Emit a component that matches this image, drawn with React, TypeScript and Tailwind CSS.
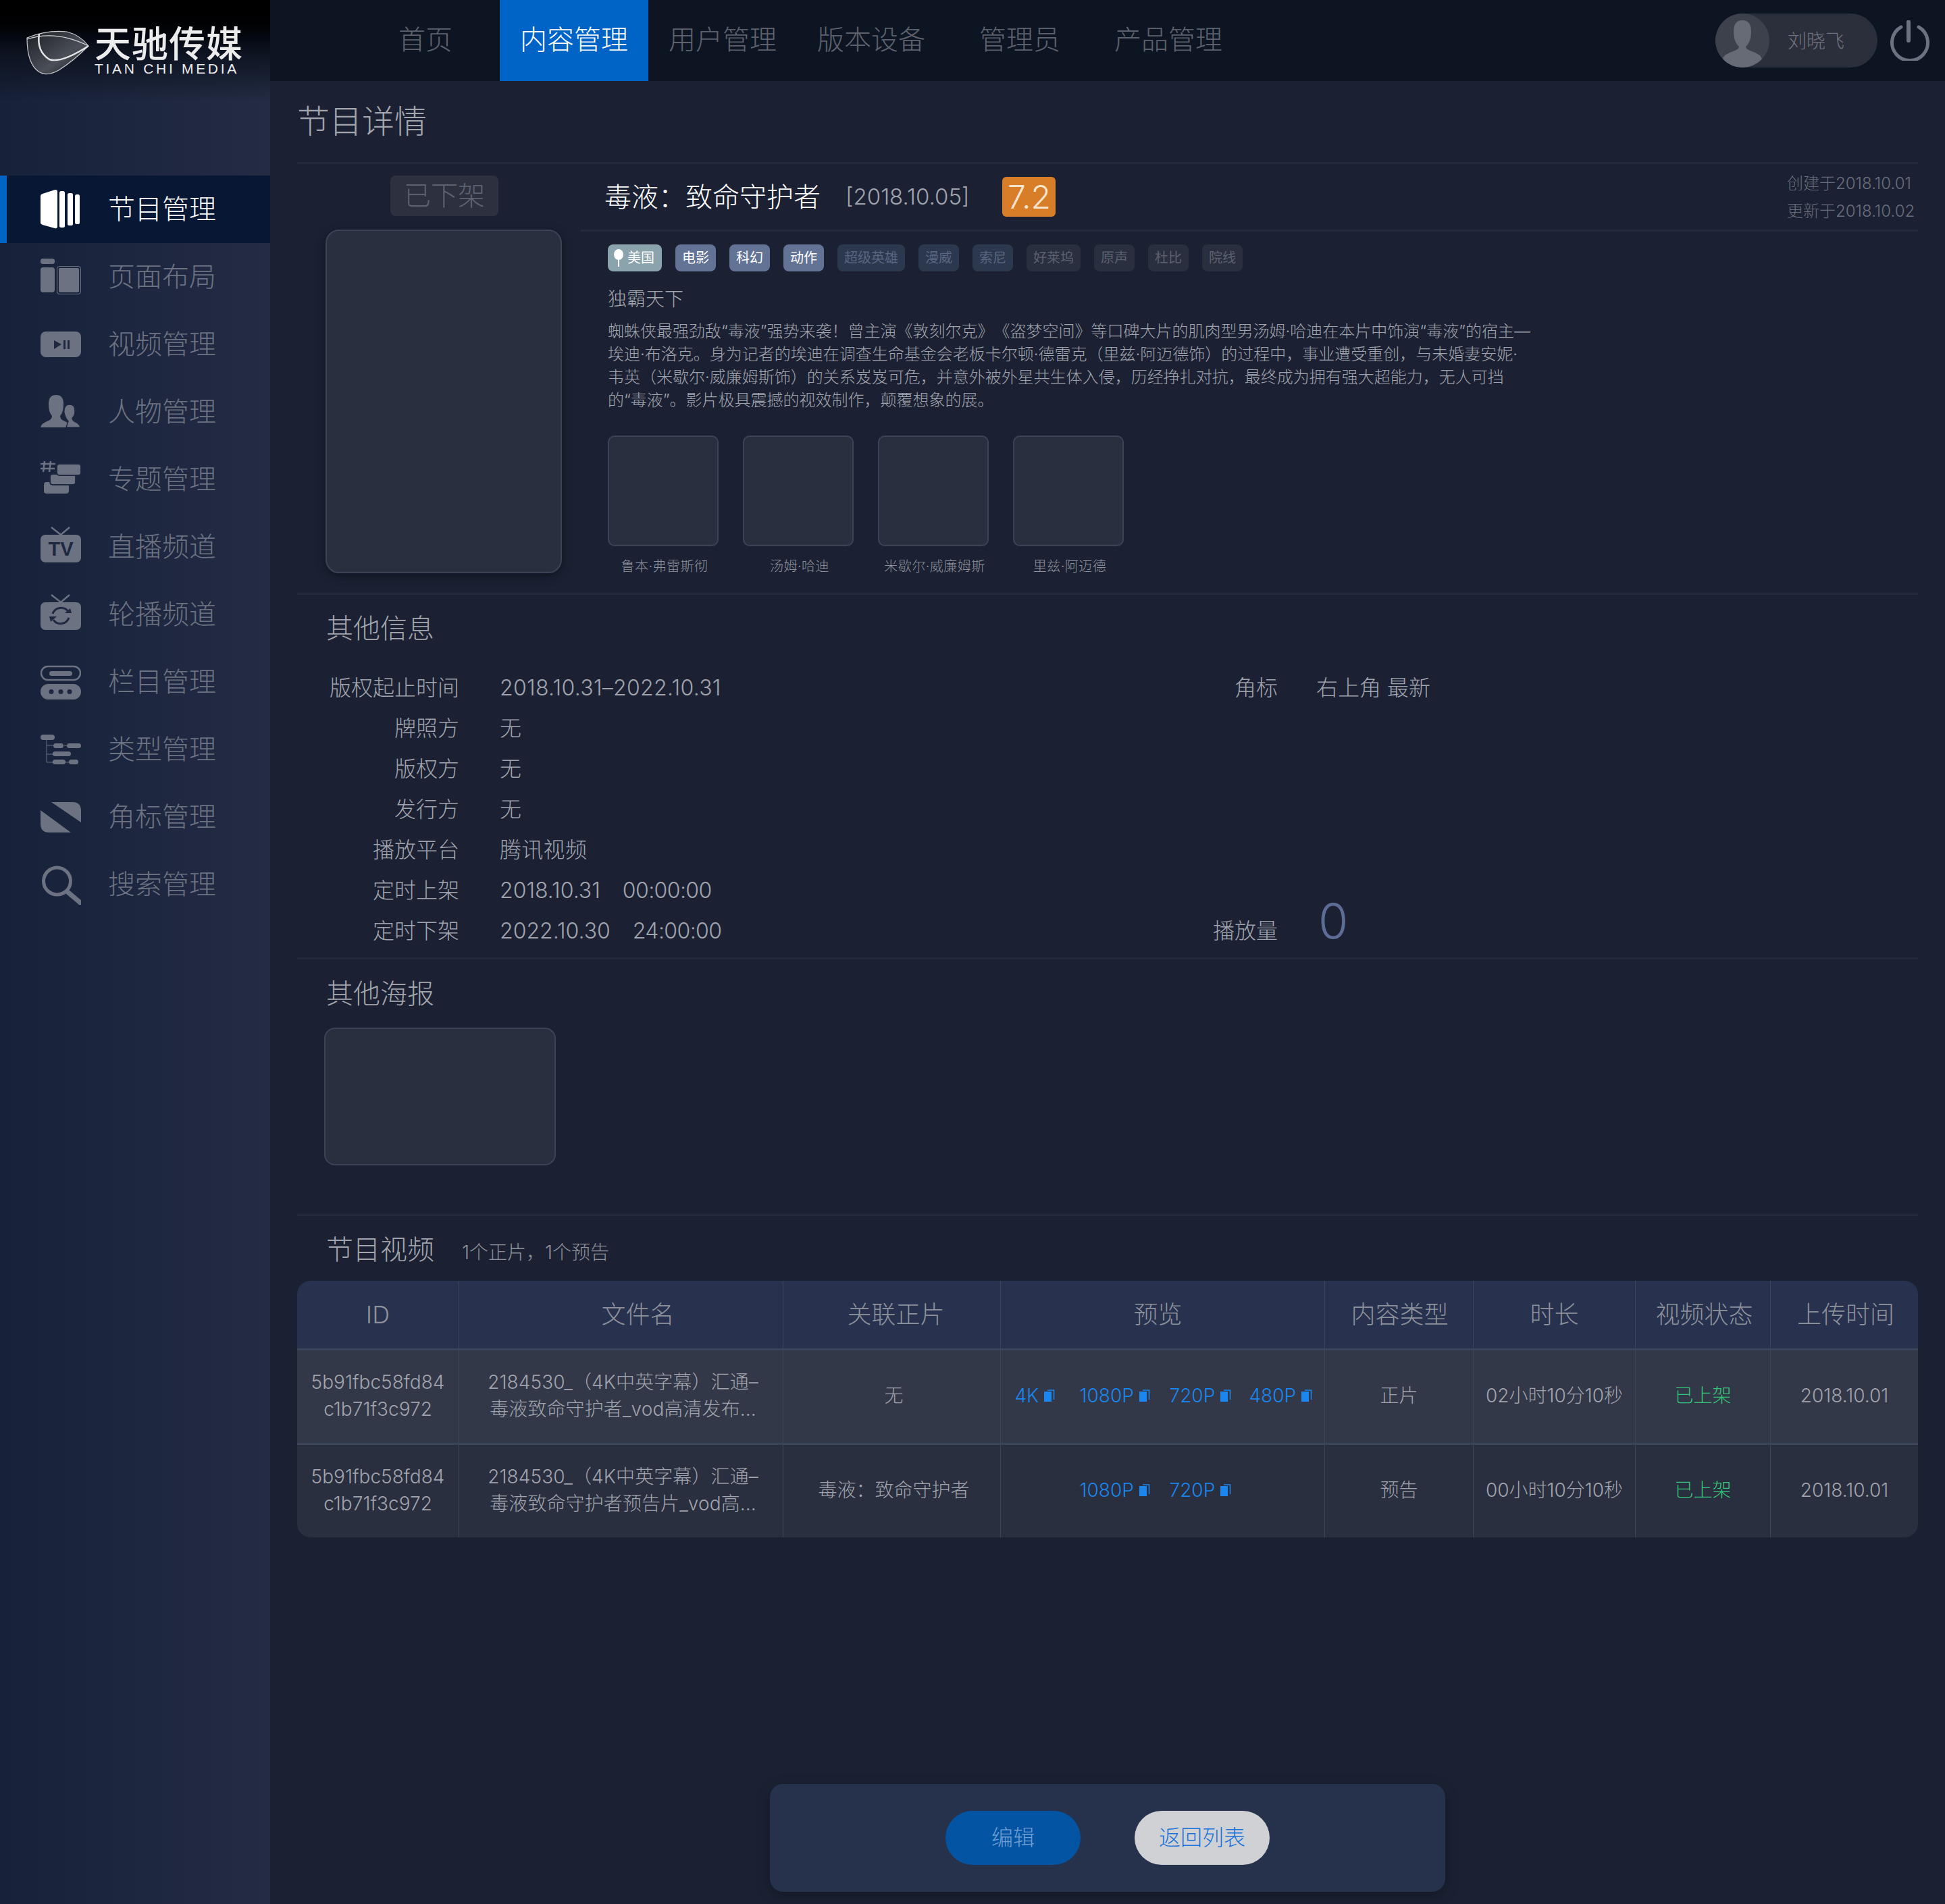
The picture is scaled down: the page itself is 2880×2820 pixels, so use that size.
import type { ReactNode } from "react";

const Icon = ({ children }: { children: ReactNode }) => (
  <svg viewBox="0 0 60 60" className="w-[60px] h-[60px] shrink-0" fill="currentColor">
    {children}
  </svg>
);

const DARK = "#1e2840";

const MENU: { label: string; icon: ReactNode }[] = [
  {
    label: "节目管理",
    icon: (
      <>
        <path d="M0 10 Q0 8 3 7 L20 1.5 Q25 0 25 4 V55 Q25 59 21 58 L3 53 Q0 52 0 50 Z" />
        <rect x="28" y="3" width="8" height="54" rx="2.5" />
        <rect x="40" y="6" width="8" height="48" rx="2.5" />
        <rect x="51" y="8" width="7" height="44" rx="2.5" />
      </>
    ),
  },
  {
    label: "页面布局",
    icon: (
      <>
        <rect x="0" y="3" width="21" height="8" rx="3.5" />
        <rect x="0" y="16" width="21" height="37" rx="4" />
        <rect x="24.5" y="14.5" width="35" height="41" rx="3.5" fill="none" stroke="currentColor" strokeWidth="1" />
        <rect x="27" y="17" width="30" height="36" rx="2" />
      </>
    ),
  },
  {
    label: "视频管理",
    icon: (
      <>
        <rect x="0" y="11" width="60" height="38" rx="8" />
        <path d="M20 24 L31 30 L20 37 Z" fill={DARK} />
        <rect x="34" y="24" width="3" height="13" fill={DARK} />
        <rect x="40" y="24" width="3" height="13" fill={DARK} />
      </>
    ),
  },
  {
    label: "人物管理",
    icon: (
      <>
        <path d="M0 53 Q1 47 12 43 Q17 41 17 36 Q12 31 12 18 Q12 5 23 5 Q34 5 34 18 Q34 31 29 36 Q29 41 34 43 Q38 45 40 46 L44 53 Z" />
        <path d="M38 53 L41 44 Q37 40 36 35 Q34 31 35 27 Q36 19 43 19 Q51 19 51 28 Q51 36 47 39 Q47 43 52 45 Q58 48 59 53 Z" stroke={DARK} strokeWidth="1.5" />
      </>
    ),
  },
  {
    label: "专题管理",
    icon: (
      <>
        <path d="M6 3 L4 19 M15 3 L13 19 M0 7 H22 M0 14 H21" stroke="currentColor" strokeWidth="2.5" fill="none" />
        <rect x="5" y="34" width="37" height="17" rx="4" />
        <rect x="14" y="22" width="38" height="16" rx="4" stroke={DARK} strokeWidth="2" />
        <rect x="24" y="7" width="36" height="17" rx="4" stroke={DARK} strokeWidth="2" />
      </>
    ),
  },
  {
    label: "直播频道",
    icon: (
      <>
        <path d="M16 1 L30 12 L43 1" stroke="currentColor" strokeWidth="2.5" fill="none" />
        <rect x="0" y="12" width="60" height="41" rx="7" />
        <text x="30" y="43" textAnchor="middle" fontSize="29" fontWeight="700" fill={DARK} fontFamily="Liberation Sans, sans-serif">
          TV
        </text>
      </>
    ),
  },
  {
    label: "轮播频道",
    icon: (
      <>
        <path d="M16 1 L30 12 L43 1" stroke="currentColor" strokeWidth="2.5" fill="none" />
        <rect x="0" y="12" width="60" height="41" rx="7" />
        <path d="M18 29 A13 13 0 0 1 41 26" stroke={DARK} strokeWidth="3" fill="none" />
        <path d="M42 35 A13 13 0 0 1 19 38" stroke={DARK} strokeWidth="3" fill="none" />
        <path d="M36 28 L46 28 L44 21 Z" fill={DARK} />
        <path d="M13 33 L24 33 L15 41 Z" fill={DARK} />
      </>
    ),
  },
  {
    label: "栏目管理",
    icon: (
      <>
        <rect x="1" y="7" width="58" height="20" rx="10" fill="none" stroke="currentColor" strokeWidth="2.5" />
        <rect x="13" y="14" width="34" height="7" rx="3.5" />
        <rect x="0" y="33" width="60" height="23" rx="11.5" />
        <circle cx="16" cy="44.5" r="3.5" fill={DARK} />
        <circle cx="30" cy="44.5" r="3.5" fill={DARK} />
        <circle cx="43" cy="44.5" r="3.5" fill={DARK} />
      </>
    ),
  },
  {
    label: "类型管理",
    icon: (
      <>
        <path d="M9 14 V49 H20 M9 24 H20 M35 24 H40 M9 37 H20 M37 49 H42" stroke="currentColor" strokeWidth="1" fill="none" />
        <rect x="0" y="8" width="21" height="8" rx="4" />
        <rect x="19" y="21" width="15" height="7" rx="3.5" />
        <rect x="39" y="21" width="21" height="7" rx="3.5" />
        <rect x="18" y="33" width="27" height="7" rx="3.5" />
        <rect x="18" y="45" width="19" height="7" rx="3.5" />
        <rect x="42" y="45" width="14" height="7" rx="3.5" />
      </>
    ),
  },
  {
    label: "角标管理",
    icon: (
      <>
        <path d="M16 8 H47 Q60 8 60 21 V38 Z" />
        <path d="M0 20 L45 53 H13 Q0 53 0 40 Z" />
      </>
    ),
  },
  {
    label: "搜索管理",
    icon: (
      <>
        <circle cx="24.5" cy="25" r="20" fill="none" stroke="currentColor" strokeWidth="5" />
        <path d="M40 41 L59 57" stroke="currentColor" strokeWidth="7" strokeLinecap="round" fill="none" />
      </>
    ),
  },
];

const NAV = ["首页", "内容管理", "用户管理", "版本设备", "管理员", "产品管理"];

const TAGS = [
  { label: "美国", w: "w-[80px]", cls: "bg-[#8ba3ac] text-white", pin: true },
  { label: "电影", w: "w-[60px]", cls: "bg-[#637396] text-white" },
  { label: "科幻", w: "w-[60px]", cls: "bg-[#637396] text-white" },
  { label: "动作", w: "w-[60px]", cls: "bg-[#637396] text-white" },
  { label: "超级英雄", w: "w-[100px]", cls: "bg-[#2c384e] text-[#5a6580]" },
  { label: "漫威", w: "w-[60px]", cls: "bg-[#2c384e] text-[#5a6580]" },
  { label: "索尼", w: "w-[60px]", cls: "bg-[#2c384e] text-[#5a6580]" },
  { label: "好莱坞", w: "w-[80px]", cls: "bg-[#2a2f3f] text-[#5c616f]" },
  { label: "原声", w: "w-[60px]", cls: "bg-[#2a2f3f] text-[#5c616f]" },
  { label: "杜比", w: "w-[60px]", cls: "bg-[#2a2f3f] text-[#5c616f]" },
  { label: "院线", w: "w-[60px]", cls: "bg-[#2a2f3f] text-[#5c616f]" },
];

const CAST = ["鲁本·弗雷斯彻", "汤姆·哈迪", "米歇尔·威廉姆斯", "里兹·阿迈德"];

const INFO: [string, string, string?][] = [
  ["版权起止时间", "2018.10.31–2022.10.31"],
  ["牌照方", "无"],
  ["版权方", "无"],
  ["发行方", "无"],
  ["播放平台", "腾讯视频"],
  ["定时上架", "2018.10.31", "00:00:00"],
  ["定时下架", "2022.10.30", "24:00:00"],
];

const COLS = [
  { label: "ID", cls: "" },
  { label: "文件名", cls: "pl-[50px]" },
  { label: "关联正片", cls: "pl-[12px]" },
  { label: "预览", cls: "pr-[14px]" },
  { label: "内容类型", cls: "pl-[2px]" },
  { label: "时长", cls: "" },
  { label: "视频状态", cls: "pl-[4px]" },
  { label: "上传时间", cls: "pl-[4px]" },
];

const ROWS = [
  {
    file: ["2184530_（4K中英字幕）汇通–", "毒液致命守护者_vod高清发布..."],
    link: "无",
    res: ["4K", "1080P", "720P", "480P"],
    type: "正片",
    time: "02小时10分10秒",
    bg: "bg-[#333848]",
  },
  {
    file: ["2184530_（4K中英字幕）汇通–", "毒液致命守护者预告片_vod高..."],
    link: "毒液：致命守护者",
    res: ["", "1080P", "720P", ""],
    type: "预告",
    time: "00小时10分10秒",
    bg: "bg-[#2a2f3f]",
  },
];

const Divider = () => <div className="h-[3px] bg-[#232a3c]" />;

const Logo = () => (
  <div className="h-[120px] flex items-start pl-[39px] pt-[44px]">
    <svg viewBox="0 0 94 70" className="w-[94px] h-[70px] shrink-0" fill="none">
      <defs>
        <linearGradient id="eye" x1="0" y1="0" x2="1" y2="1">
          <stop offset="0" stopColor="#1c1f26" />
          <stop offset="0.6" stopColor="#4b4f57" />
          <stop offset="1" stopColor="#16181e" />
        </linearGradient>
      </defs>
      <path d="M1 12 Q30 0 60 3 Q80 8 92 24 Q70 46 48 60 Q30 70 18 62 Q1 50 1 12 Z" fill="url(#eye)" stroke="#c9cacc" strokeWidth="1.2" />
      <path d="M19 6 Q15 32 34 44 Q52 50 92 24" stroke="#e4e5e6" strokeWidth="2.5" />
      <path d="M1 14 Q44 0 92 24" stroke="#d5d6d8" strokeWidth="1.2" />
    </svg>
    <div className="ml-[7px] w-[220px] text-[#ececec] -mt-[4px]">
      <div className="text-[54px] leading-[52px] font-medium tracking-[1px] whitespace-nowrap">天驰传媒</div>
      <div className="text-[21px] leading-[20px] tracking-[3.7px] whitespace-nowrap font-['Liberation_Sans',sans-serif]">TIAN CHI MEDIA</div>
    </div>
  </div>
);

const Sidebar = () => (
  <aside className="relative w-[400px] shrink-0 bg-gradient-to-r from-[#17213a] to-[#242c44]">
    <div className="absolute inset-x-0 top-0 h-[150px] bg-gradient-to-b from-black via-[#0c121e] to-transparent" />
    <div className="relative">
      <Logo />
      <nav className="mt-[140px]">
        {MENU.map((item, i) => (
          <div
            key={item.label}
            className={`h-[100px] flex items-center ${i === 0 ? "bg-[#081734] text-white border-l-[10px] border-[#0063c6] pl-[50px]" : "pl-[60px] text-[#6c7282]"}`}
          >
            <Icon>{item.icon}</Icon>
            <span className="ml-[40px] text-[40px] leading-none whitespace-nowrap">{item.label}</span>
          </div>
        ))}
      </nav>
    </div>
  </aside>
);

const Header = () => (
  <header className="h-[120px] bg-[#0e1522] flex items-center pl-[120px] pr-[22px]">
    {NAV.map((n, i) => (
      <div
        key={n}
        className={`w-[220px] h-[120px] pb-[3px] flex items-center justify-center text-[40px] ${i === 1 ? "bg-[#0063c6] text-white" : "text-[#5d626e]"}`}
      >
        {n}
      </div>
    ))}
    <div className="ml-auto w-[240px] h-[80px] rounded-full bg-[#2a2f3b] flex items-center">
      <div className="w-[80px] h-[80px] rounded-full bg-[#3d414c] overflow-hidden shrink-0">
        <svg viewBox="0 0 80 80" className="w-full h-full" fill="#666b76">
          <path d="M40 10 Q53 10 53 27 Q53 42 45 49 Q45 53 54 56 Q68 60 70 70 L62 80 H18 L11 66 Q14 60 26 56 Q35 53 35 49 Q27 42 27 27 Q27 10 40 10 Z" />
        </svg>
      </div>
      <span className="ml-[27px] mt-[2px] text-[28px] text-[#6f737e] whitespace-nowrap">刘晓飞</span>
    </div>
    <svg viewBox="0 0 60 60" className="ml-[18px] w-[60px] h-[60px] mt-[-1px] shrink-0" fill="none" stroke="#6c7282" strokeWidth="5" strokeLinecap="round">
      <path d="M17 10 A26.5 26.5 0 1 0 43 10" />
      <path d="M28 2.5 V30" strokeWidth="6" />
    </svg>
  </header>
);

const Placeholder = ({ className }: { className: string }) => (
  <div className={`bg-[#2a2f3f] border-[2px] border-[#3a4358] ${className}`} />
);

const Detail = () => (
  <section className="flex h-[635px]">
    <div className="w-[420px] shrink-0 pl-[42px]">
      <div className="mt-[17px] ml-[96px] w-[160px] h-[60px] rounded-[8px] bg-[#2c303f] flex items-center justify-center text-[40px] text-[#5d6270]">
        已下架
      </div>
      <Placeholder className="mt-[20px] w-[350px] h-[509px] rounded-[20px] shadow-[0_4px_14px_rgba(0,0,0,0.4)]" />
    </div>
    <div className="flex-1">
      <div className="h-[100px] flex items-center border-b-[3px] border-[#232a3c] pl-[35px]">
        <h2 className="text-[40px] text-white whitespace-nowrap">毒液：致命守护者</h2>
        <span className="ml-[37px] text-[33px] text-[#a0a4ae] whitespace-nowrap">[2018.10.05]</span>
        <span className="ml-[49px] w-[79px] h-[59px] rounded-[6px] bg-[#d97e28] flex items-center justify-center text-[48px] text-[#f5e3cc]">7.2</span>
        <div className="ml-auto w-[194px] text-[24px] leading-[41px] text-[#686d7b] whitespace-nowrap">
          <div>创建于2018.10.01</div>
          <div>更新于2018.10.02</div>
        </div>
      </div>
      <div className="pl-[40px]">
        <div className="mt-[19px] flex gap-[20px]">
          {TAGS.map((t) => (
            <span key={t.label} className={`${t.w} h-[40px] rounded-[8px] flex items-center justify-center font-normal text-[20px] whitespace-nowrap ${t.cls}`}>
              {t.pin && (
                <svg viewBox="0 0 14 26" className="w-[14px] h-[26px] mr-[6px] -ml-[2px] shrink-0" fill="white">
                  <ellipse cx="7" cy="8" rx="7" ry="8" />
                  <rect x="6" y="14" width="2" height="12" />
                </svg>
              )}
              {t.label}
            </span>
          ))}
        </div>
        <div className="mt-[21px] text-[28px] leading-[40px] text-[#a3a6ae]">独霸天下</div>
        <p className="mt-[11px] text-[24px] leading-[34px] text-[#a0a4ae] whitespace-nowrap">
          蜘蛛侠最强劲敌“毒液”强势来袭！曾主演《敦刻尔克》《盗梦空间》等口碑大片的肌肉型男汤姆·哈迪在本片中饰演“毒液”的宿主—
          <br />
          埃迪·布洛克。身为记者的埃迪在调查生命基金会老板卡尔顿·德雷克（里兹·阿迈德饰）的过程中，事业遭受重创，与未婚妻安妮·
          <br />
          韦英（米歇尔·威廉姆斯饰）的关系岌岌可危，并意外被外星共生体入侵，历经挣扎对抗，最终成为拥有强大超能力，无人可挡
          <br />
          的“毒液”。影片极具震撼的视效制作，颠覆想象的展。
        </p>
        <div className="mt-[35px] flex gap-[36px]">
          {CAST.map((c) => (
            <div key={c} className="w-[164px]">
              <Placeholder className="w-[164px] h-[164px] rounded-[10px]" />
              <div className="mt-[15px] pl-[4px] text-[20px] leading-[30px] tracking-[0.5px] text-[#8d919c] text-center whitespace-nowrap">{c}</div>
            </div>
          ))}
        </div>
      </div>
    </div>
  </section>
);

const SectionTitle = ({ children }: { children: ReactNode }) => (
  <h3 className="text-[40px] leading-[60px] text-[#a3a6ae] pl-[43px] whitespace-nowrap">{children}</h3>
);

const OtherInfo = () => (
  <section className="h-[537px] pt-[20px]">
    <SectionTitle>其他信息</SectionTitle>
    <div className="relative mt-[28px] text-[32px] leading-[60px] text-[#a0a4ae]">
      {INFO.map(([k, v, t]) => (
        <div key={k} className="flex whitespace-nowrap">
          <span className="w-[240px] text-right">{k}</span>
          <span className={`ml-[60px] ${t ? "" : "tracking-[0.3px]"}`}>{v}</span>
          {t && <span className="ml-[33px] tracking-[-0.6px]">{t}</span>}
        </div>
      ))}
      <div className="absolute top-0 left-0 w-[1452px] text-right">角标</div>
      <div className="absolute top-0 left-[1509px] whitespace-nowrap">右上角 最新</div>
      <div className="absolute top-[360px] left-0 w-[1452px] text-right">播放量</div>
      <div className="absolute top-[345px] left-[1512px] text-[72px] leading-[60px] text-[#5c6c94]">0</div>
    </div>
  </section>
);

const OtherPosters = () => (
  <section className="h-[377px] pt-[21px]">
    <SectionTitle>其他海报</SectionTitle>
    <Placeholder className="mt-[20px] ml-[40px] w-[343px] h-[204px] rounded-[16px]" />
  </section>
);

const ResIcon = () => (
  <svg viewBox="0 0 16 18" className="w-[16px] h-[18px] ml-[8px] shrink-0">
    <rect x="0" y="3" width="11" height="15" fill="#1a86ef" />
    <path d="M5 1 H14.5 V15" stroke="#1a86ef" strokeWidth="1.5" fill="none" />
  </svg>
);

const CELL = "flex items-center justify-center text-center border-l border-[#3a445a] first:border-l-0";

const VideoTable = () => (
  <section>
    <div className="h-[96px] flex items-center pl-[43px] pt-[3px]">
      <h3 className="text-[40px] text-[#a3a6ae] whitespace-nowrap">节目视频</h3>
      <span className="ml-[41px] mt-[8px] text-[28px] text-[#8d919c] whitespace-nowrap">1个正片，1个预告</span>
    </div>
    <div className="rounded-[20px] overflow-hidden">
      <div className="grid grid-cols-[239px_480px_322px_480px_220px_240px_200px_219px] h-[100px] bg-[#28324e] text-[36px] text-[#8d919c]">
        {COLS.map((c) => (
          <div key={c.label} className={`${CELL} ${c.cls}`}>
            {c.label}
          </div>
        ))}
      </div>
      {ROWS.map((r) => (
        <div
          key={r.type}
          className={`grid grid-cols-[239px_480px_322px_480px_220px_240px_200px_219px] h-[140px] border-t-[3px] border-[#3a445a] text-[28px] leading-[40px] text-[#a0a4ae] ${r.bg}`}
        >
          <div className={`${CELL} pb-[3px]`}>
            <div>
              5b91fbc58fd84
              <br />
              c1b71f3c972
            </div>
          </div>
          <div className={`${CELL} pb-[3px] pl-[6px]`}>
            <div className="whitespace-nowrap tracking-[0.1px]">
              {r.file[0]}
              <br />
              {r.file[1]}
            </div>
          </div>
          <div className={`${CELL} pb-[3px] pl-[6px]`}>{r.link}</div>
          <div className={`${CELL} pb-[3px]`}>
            <div className="ml-[2px] grid grid-cols-[96px_133px_118px_93px] text-left text-[#1a86ef]">
              {r.res.map((s, i) => (
                <span key={i} className="flex items-center">
                  {s}
                  {s && <ResIcon />}
                </span>
              ))}
            </div>
          </div>
          <div className={`${CELL} pb-[3px]`}>{r.type}</div>
          <div className={`${CELL} pb-[3px] whitespace-nowrap`}>{r.time}</div>
          <div className={`${CELL} pb-[3px] text-[#34c578]`}>已上架</div>
          <div className={`${CELL} pb-[3px]`}>2018.10.01</div>
        </div>
      ))}
    </div>
  </section>
);

export default function App() {
  return (
    <div className="flex w-[2880px] h-[2820px] bg-[#1b2133] overflow-hidden font-light [text-spacing-trim:space-all] font-['Inter','Noto_Sans_CJK_SC',sans-serif]">
      <Sidebar />
      <main className="flex-1 flex flex-col">
        <Header />
        <div className="flex-1 flex flex-col px-[40px]">
          <div className="h-[120px] flex items-center text-[48px] text-[#a3a6ae]">节目详情</div>
          <Divider />
          <Detail />
          <Divider />
          <OtherInfo />
          <Divider />
          <OtherPosters />
          <Divider />
          <VideoTable />
          <div className="mt-auto mb-[18px] ml-[700px] w-[1000px] h-[160px] rounded-[20px] bg-[#26324b] shadow-[0_6px_20px_rgba(0,0,0,0.25)] flex items-center justify-center gap-[80px] text-[32px]">
            <button className="w-[200px] h-[80px] rounded-full bg-[#0454a4] text-[#6f9fd2]">编辑</button>
            <button className="w-[200px] h-[80px] rounded-full bg-[#d0d1d5] text-[#1a73d8]">返回列表</button>
          </div>
        </div>
      </main>
    </div>
  );
}
